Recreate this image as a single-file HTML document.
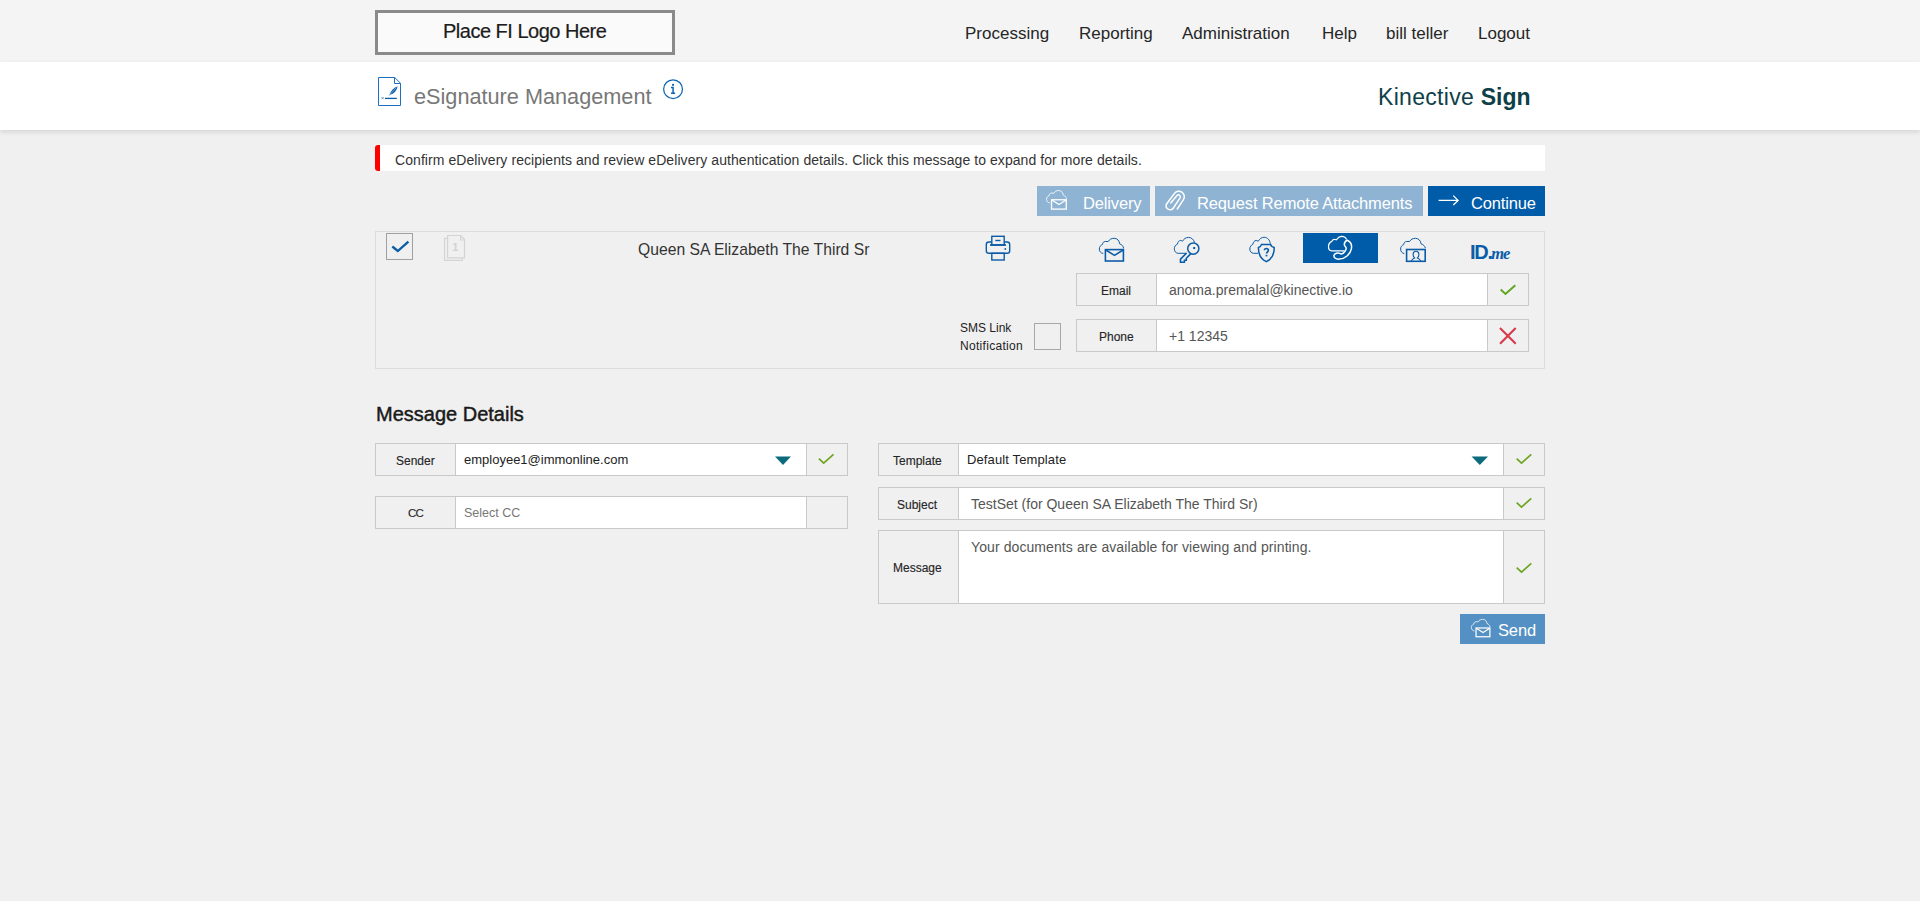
<!DOCTYPE html>
<html><head><meta charset="utf-8">
<style>
*{box-sizing:border-box;margin:0;padding:0}
html,body{width:1920px;height:901px;overflow:hidden;background:#f0f0f0;font-family:"Liberation Sans",sans-serif;color:#333}
.a{position:absolute}
.t{position:absolute;white-space:nowrap;line-height:1}
#top{position:absolute;left:0;top:0;width:1920px;height:62px;background:#f4f4f4}
#logo{position:absolute;left:375px;top:10px;width:300px;height:45px;border:3px solid #8a8a8a;background:#fafafa}
#band{position:absolute;left:0;top:62px;width:1920px;height:68px;background:#fff;box-shadow:0 2px 5px rgba(0,0,0,.12)}
.nav{font-size:17px;color:#262626}
.btn{position:absolute;top:186px;height:30px;background:#8fb3d3}
.btxt{font-size:16.5px;color:#fff;letter-spacing:-0.15px}
.box{position:absolute;border:1px solid #c9c9c9;background:#f0f0f0}
.inp{position:absolute;background:#fff;border-left:1px solid #c9c9c9;border-right:1px solid #c9c9c9;top:0;bottom:0}
.lbl{font-size:12px;color:#262626;-webkit-text-stroke:0.15px #262626}
.itxt{font-size:14px;color:#555}
.stxt{font-size:13px;color:#222}
svg{position:absolute;overflow:visible}
</style></head><body>
<div id="top"></div>
<div id="logo"></div>
<div class="t" style="left:443px;top:21px;font-size:20px;color:#1c1c1c;letter-spacing:-0.5px;-webkit-text-stroke:0.2px #1c1c1c">Place FI Logo Here</div>

<div class="t nav" style="left:965px;top:25px">Processing</div>
<div class="t nav" style="left:1079px;top:25px">Reporting</div>
<div class="t nav" style="left:1182px;top:25px">Administration</div>
<div class="t nav" style="left:1322px;top:25px">Help</div>
<div class="t nav" style="left:1386px;top:25px">bill teller</div>
<div class="t nav" style="left:1478px;top:25px">Logout</div>

<div id="band"></div>
<!-- doc icon -->
<svg style="left:374px;top:74px" width="32" height="34" viewBox="0 0 32 34" fill="none" stroke="#1f6fc0" stroke-width="1">
<path d="M4.5,3.5 H20.7 L26.5,9.2 V31.5 H4.5 Z"/>
<path d="M20.5,3.5 V9.5 H26.5"/>
<path d="M11,24.4 H22.8" stroke-width="1.3" stroke="#0a5ca8"/>
<path d="M7.6,23.2 L9.6,25.2 M9.6,23.2 L7.6,25.2" stroke-width="0.7"/>
<path d="M14.3,22.6 L15.6,20.6 C16.5,17.2 19.5,13.8 23.5,12.2 C23,16 20.5,19.6 16.2,20.6 Z" fill="#0a5ca8" stroke="none"/><path d="M16.3,20.2 L22.3,13.6" stroke="#fff" stroke-width="0.45"/>
</svg>
<div class="t" style="left:414px;top:86px;font-size:21.7px;color:#777">eSignature Management</div>
<svg style="left:660px;top:76px" width="26" height="26" viewBox="0 0 26 26" fill="none" stroke="#0a64b4">
<circle cx="13.05" cy="13.15" r="9.4" stroke-width="1.25"/>
<rect x="12.1" y="7.9" width="1.9" height="1.9" fill="#0a64b4" stroke="none"/>
<path d="M11,11.6 H13.1 V17.2 M11,17.2 H15.1" stroke-width="1.5"/>
</svg>
<div class="t" style="left:1378px;top:86px;font-size:23px;color:#0e4048"><span style="letter-spacing:0.3px">Kinective </span><b>Sign</b></div>

<!-- alert -->
<div class="a" style="left:375px;top:145px;width:1170px;height:26px;background:#fff;border-left:5px solid #ff0000;border-radius:3px 0 0 3px"></div>
<div class="t" style="left:395px;top:153px;font-size:14px;color:#333;letter-spacing:0.07px">Confirm eDelivery recipients and review eDelivery authentication details. Click this message to expand for more details.</div>
<!-- buttons -->
<svg width="0" height="0" style="position:absolute">
<defs>
<symbol id="mailcloud" viewBox="0 0 35 32" overflow="visible">
<path d="M8.3,19.4 C5.8,19.4 4.3,17.2 4.3,15 C4.3,12.8 5.6,11.2 7.4,10.6 C7.7,8.6 8.6,7.5 10.2,7.5 L13.2,7.5 C14.6,5.3 16.5,4.3 19.1,4.3 C22.3,4.3 24.5,6.8 24.6,9.8 C26.9,10.6 28.4,12.1 28.6,14.4" fill="none" stroke="currentColor" stroke-width="1"/>
<rect x="10.4" y="15.6" width="18" height="11.4" fill="none" stroke="currentColor" stroke-width="1.6"/>
<path d="M10.8,16 L19.5,21.4 L28.1,16" fill="none" stroke="currentColor" stroke-width="1.5"/>
</symbol>
</defs>
</svg>
<div class="btn" style="left:1037px;width:113px"></div>
<svg style="left:1043px;top:187px;color:#fff" width="28.7" height="26.2"><use href="#mailcloud" width="28.7" height="26.2"/></svg>
<div class="t btxt" style="left:1083px;top:195px">Delivery</div>
<div class="btn" style="left:1155px;width:268px"></div>
<svg style="left:1160px;top:186px" width="32" height="30" viewBox="0 0 32 30" fill="none" stroke="#fff" stroke-width="1.5" stroke-linecap="round">
<path d="M17.3,23 L23.4,13.6 A5.4,5.4 0 0 0 14.3,7.6 L6.4,18.2 A4,4 0 0 0 13.2,22.2 L20.2,11.6 A1.9,1.9 0 0 0 17,9.6 L10.7,17"/>
</svg>
<div class="t btxt" style="left:1197px;top:195px">Request Remote Attachments</div>
<div class="btn" style="left:1428px;width:117px;background:#005ca9"></div>
<svg style="left:1432px;top:190px" width="32" height="22" viewBox="0 0 32 22" fill="none" stroke="#fff" stroke-width="1.3">
<path d="M6.6,10.4 H26 M21.3,5.6 L26.1,10.4 L21.3,15"/>
</svg>
<div class="t btxt" style="left:1471px;top:195px">Continue</div>

<!-- recipient panel -->
<div class="a" style="left:375px;top:231px;width:1170px;height:138px;border:1px solid #dcdcdc;background:#f0f0f0"></div>
<div class="a" style="left:386px;top:233px;width:27px;height:27px;border:1px solid #a0a0a0"></div>
<svg style="left:386px;top:233px" width="27" height="27" viewBox="0 0 27 27" fill="none" stroke="#0a5ca8" stroke-width="2.3">
<path d="M6.3,13.5 L11.8,18 L22.4,8.6"/>
</svg>
<svg style="left:440px;top:232px" width="30" height="32" viewBox="0 0 30 32" fill="none" stroke="#d4d4d4" stroke-width="1.2">
<path d="M7.4,6.4 H4.6 V28.4 H22.3 V25.8"/>
<path d="M7.6,3.5 H20.8 L24.5,7.6 V25.8 H7.6 Z" fill="#f0f0f0"/>
<path d="M20.6,3.5 V8 H24.5"/>
<text x="15.4" y="19" font-family="Liberation Sans" font-size="11" font-weight="bold" fill="#d2d2d2" stroke="none" text-anchor="middle">1</text>
</svg>
<div class="t" style="left:638px;top:242px;font-size:15.7px;color:#333">Queen SA Elizabeth The Third Sr</div>
<!-- printer -->
<svg style="left:980px;top:230px" width="36" height="36" viewBox="0 0 36 36" fill="none" stroke="#0a5ca8" stroke-width="1.4">
<rect x="6.3" y="12" width="23.4" height="11.3" rx="2.6"/>
<rect x="11.8" y="6.3" width="12.4" height="8.7" fill="#f0f0f0"/>
<path d="M15.3,10.5 H20.5"/>
<path d="M10,15 H26" stroke-width="1.7"/>
<circle cx="25.3" cy="19" r="0.9" fill="#0a5ca8" stroke="none"/>
<rect x="11.8" y="23.3" width="12.4" height="6.7" fill="#f0f0f0"/>
</svg>
<!-- auth icons -->
<svg style="left:1095px;top:234px;color:#0a5ca8" width="35" height="32"><use href="#mailcloud" width="35" height="32"/></svg>
<svg style="left:1170px;top:234px" width="35" height="32" viewBox="0 0 35 32" fill="none" stroke="#0a5ca8">
<path d="M16.5,19.3 H8.2 C5.8,19.3 4.3,17.1 4.3,14.8 C4.3,12.6 5.6,10.9 7.4,10.2 C7.9,7.8 9,6.4 10.7,6.4 C11.4,6.4 12,6.8 12.4,7.3 C13.8,4.8 16,3.4 18.5,3.4 C21.5,3.4 23.8,5.6 24.6,8.6" stroke-width="1"/>
<circle cx="23.3" cy="14.6" r="5.6" stroke-width="1.5" fill="#f0f0f0"/>
<rect x="23.2" y="13" width="2" height="2" fill="#0a5ca8" stroke="none"/>
<path d="M16.6,19 L10.5,25.2 V28.3 H14.4 V26.3 H16.3 V24.3 L20.8,19.6" stroke-width="1.6" stroke-linejoin="miter"/>
</svg>
<svg style="left:1245px;top:234px" width="35" height="32" viewBox="0 0 35 32" fill="none" stroke="#0a5ca8">
<path d="M13.2,19.3 H8.5 C6.3,19.3 4.8,17.2 4.8,15 C4.8,12.8 6.1,11.1 7.8,10.4 C8.3,8 9.5,6.5 11.2,6.5 C12,6.5 12.6,6.8 13.2,7.3 C14.6,4.8 16.6,3.3 19.1,3.3 C22.4,3.3 24.9,6 25.3,9.7" stroke-width="1"/>
<path d="M16.5,10.4 H25.6 C26.2,12.3 27.6,13.3 29.2,13.6 C29.4,20.5 26.5,25.2 21.3,27.6 C16,25.2 13.3,20.5 13.4,13.6 C15,13.3 16,12.3 16.5,10.4 Z" stroke-width="1.5" fill="#f0f0f0"/>
<path d="M19.4,16.3 C19.5,15.1 20.3,14.5 21.4,14.5 C22.6,14.5 23.4,15.3 23.4,16.3 C23.4,17.6 21.5,18 21.5,19.6" stroke-width="1.7"/><rect x="20.6" y="20.8" width="1.8" height="1.6" fill="#0a5ca8" stroke="none"/>
</svg>
<div class="a" style="left:1303px;top:233px;width:75px;height:30px;background:#005ca9"></div>
<svg style="left:1322px;top:232px" width="35" height="32" viewBox="0 0 35 32" fill="none" stroke="#fff">
<path d="M22.6,18.8 H9.8 C7.8,18.8 6.5,16.9 6.5,14.5 C6.5,12.3 7.8,10.4 9.8,9.4 C10.2,8 11,7.3 12.2,7.3 C13,7.3 13.9,7.6 14.5,7.8 C15.8,5.6 17.6,4.3 19.8,4.3 C22,4.3 23.8,5.5 24.6,7.5" stroke-width="1.2"/>
<path d="M25.2,8.2 C28.6,9.6 30.2,13 29.3,17.2 C28.2,22.3 23,26.8 17.4,27.1 C14.5,27.3 12.2,25.9 11.9,24 C11.7,22.6 13.9,20.9 15.8,20.9 C17.4,20.9 18,22.1 19.6,21.9 C21.5,21.6 24.2,18.4 24.2,16.3 C24.2,14.6 22.3,14.2 22.3,12.4 C22.3,10.6 23.5,8.9 25.2,8.2 Z" stroke-width="1.5"/>
</svg>
<svg style="left:1396px;top:234px" width="35" height="32" viewBox="0 0 35 32" fill="none" stroke="#0a5ca8">
<path d="M8.3,19.5 C6,19.5 4.6,17.3 4.6,15 C4.6,12.8 5.9,11.2 7.7,10.6 C8,8.6 9,7.5 10.5,7.5 L13.5,7.5 C14.9,5.3 16.8,4.3 19.5,4.3 C22.6,4.3 24.8,6.8 25,9.8 C27.3,10.6 28.9,12 29.3,14" stroke-width="1"/>
<rect x="10.6" y="15.5" width="18.6" height="11.8" stroke-width="1.6" fill="#f0f0f0"/>
<path d="M15.2,27 C16,25.6 17.3,24.4 18.6,23.9 C17.5,22.9 17.1,21.6 17.1,20.4 C17.1,18.6 18.3,17.3 20,17.3 C21.7,17.3 22.9,18.6 22.9,20.4 C22.9,21.6 22.5,22.9 21.4,23.9 C22.7,24.4 24,25.6 24.8,27" stroke-width="1.1"/>
</svg>
<div class="t" style="left:1470px;top:242px;font-size:20px;font-weight:bold;color:#0a5ca8;letter-spacing:-1.3px">ID.<span style="font-family:'Liberation Serif',serif;font-style:italic;font-weight:bold;font-size:16.5px;letter-spacing:-1px;position:relative;left:-0.5px">me</span></div>

<!-- email / phone -->
<div class="box" style="left:1076px;top:273px;width:453px;height:33px"><div class="inp" style="left:79px;width:332px"></div></div>
<div class="t lbl" style="left:1101px;top:285px">Email</div>
<div class="t itxt" style="left:1169px;top:283px">anoma.premalal@kinective.io</div>
<svg style="left:1440px;top:268px" width="120" height="40" viewBox="0 0 120 40" fill="none" stroke="#5ea51e" stroke-width="1.9">
<path d="M60.7,21.5 L65.5,26 L75.3,17.2"/>
</svg>
<div class="box" style="left:1076px;top:319px;width:453px;height:33px"><div class="inp" style="left:79px;width:332px"></div></div>
<div class="t lbl" style="left:1099px;top:331px">Phone</div>
<div class="t itxt" style="left:1169px;top:329px">+1 12345</div>
<svg style="left:1440px;top:268px" width="120" height="100" viewBox="0 0 120 100" fill="none" stroke="#d63a4b" stroke-width="2.1">
<path d="M60,60 L75.7,75.7 M75.7,60 L60,75.7"/>
</svg>
<div class="t lbl" style="left:960px;top:322px;color:#222;-webkit-text-stroke:0">SMS Link</div>
<div class="t lbl" style="left:960px;top:340px;color:#222;letter-spacing:0.3px;-webkit-text-stroke:0">Notification</div>
<div class="a" style="left:1034px;top:323px;width:27px;height:27px;border:1px solid #a8a8a8"></div>
<!-- message details -->
<div class="t" style="left:376px;top:404px;font-size:20px;color:#1a1a1a;-webkit-text-stroke:0.45px #1a1a1a">Message Details</div>
<div class="box" style="left:375px;top:443px;width:473px;height:33px"><div class="inp" style="left:79px;width:352px"></div></div>
<div class="t lbl" style="left:396px;top:455px">Sender</div>
<div class="t stxt" style="left:464px;top:453px">employee1@immonline.com</div>
<svg style="left:770px;top:450px" width="30" height="20" viewBox="0 0 30 20"><path d="M5,6.5 H21 L13,15 Z" fill="#0b6b7d"/></svg>
<svg style="left:800px;top:440px" width="40" height="30" viewBox="0 0 40 30" fill="none" stroke="#6da521" stroke-width="1.7">
<path d="M18.9,18.7 L23.7,23.2 L33.5,14.4"/>
</svg>
<div class="box" style="left:375px;top:496px;width:473px;height:33px"><div class="inp" style="left:79px;width:352px"></div></div>
<div class="t lbl" style="left:408px;top:508px;font-size:11.5px;letter-spacing:-0.9px">CC</div>
<div class="t" style="left:464px;top:507px;font-size:12.5px;color:#777">Select CC</div>

<div class="box" style="left:878px;top:443px;width:667px;height:33px"><div class="inp" style="left:79px;width:546px"></div></div>
<div class="t lbl" style="left:893px;top:455px">Template</div>
<div class="t stxt" style="left:967px;top:453px;letter-spacing:0.12px">Default Template</div>
<svg style="left:1465px;top:450px" width="30" height="20" viewBox="0 0 30 20"><path d="M6.6,6.5 H23 L14.8,15 Z" fill="#0b6b7d"/></svg>
<svg style="left:1500px;top:440px" width="40" height="30" viewBox="0 0 40 30" fill="none" stroke="#6da521" stroke-width="1.7">
<path d="M16.7,18.7 L21.5,23.2 L31.3,14.4"/>
</svg>
<div class="box" style="left:878px;top:487px;width:667px;height:33px"><div class="inp" style="left:79px;width:546px"></div></div>
<div class="t lbl" style="left:897px;top:499px">Subject</div>
<div class="t itxt" style="left:971px;top:497px">TestSet (for Queen SA Elizabeth The Third Sr)</div>
<svg style="left:1500px;top:484px" width="40" height="30" viewBox="0 0 40 30" fill="none" stroke="#6da521" stroke-width="1.7">
<path d="M16.7,18.7 L21.5,23.2 L31.3,14.4"/>
</svg>
<div class="box" style="left:878px;top:530px;width:667px;height:74px"><div class="inp" style="left:79px;width:546px"></div></div>
<div class="t lbl" style="left:893px;top:562px">Message</div>
<div class="t itxt" style="left:971px;top:540px;letter-spacing:0.09px">Your documents are available for viewing and printing.</div>
<svg style="left:1500px;top:549px" width="40" height="30" viewBox="0 0 40 30" fill="none" stroke="#6da521" stroke-width="1.7">
<path d="M16.7,18.7 L21.5,23.2 L31.3,14.4"/>
</svg>
<div class="a" style="left:1460px;top:614px;width:85px;height:30px;background:#5490c3"></div>
<svg style="left:1468px;top:616px;color:#fff" width="27" height="24.6"><use href="#mailcloud" width="27" height="24.6"/></svg>
<div class="t btxt" style="left:1498px;top:622px">Send</div>
</body></html>
